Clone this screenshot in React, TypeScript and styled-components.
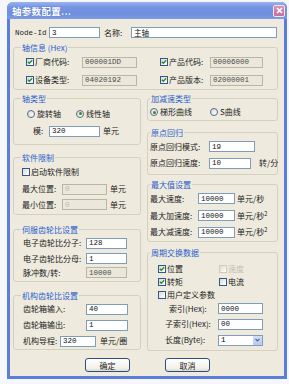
import React from "react";
import styled, { createGlobalStyle } from "styled-components";

const CJK = `"Noto Sans CJK SC", "Liberation Sans", sans-serif`;
const MONO = `"Liberation Mono", "Noto Sans CJK SC", monospace`;

const GlobalStyle = createGlobalStyle`
  body {
    margin: 0;
    background: #f6f7fb;
    font-family: ${CJK};
  }
`;

const Frame = styled.div`
  width: 280px;
  height: 377px;
  margin: 2px 0 0 7px;
  box-sizing: border-box;
  padding: 0 3px 3px;
  border-radius: 6px 6px 0 0;
  background: #5a7ed9;
  display: flex;
  flex-direction: column;
`;

const TitleBar = styled.div`
  height: 17px;
  margin: 0 -3px;
  padding: 0 2px 0 5px;
  border-radius: 6px 6px 0 0;
  background: linear-gradient(to bottom, #9bb3ee 0%, #7595e2 30%, #6f8fdf 70%, #7e9be4 100%);
  display: flex;
  align-items: center;
  justify-content: space-between;
`;

const Title = styled.span`
  color: #fff;
  font-size: 9.5px;
  font-weight: bold;
  letter-spacing: 0.3px;
  text-shadow: 0 0 1px #3a5cb8;
`;

const CloseBtn = styled.div`
  width: 12px;
  height: 12px;
  box-sizing: border-box;
  border: 1px solid #f3e6ee;
  border-radius: 2px;
  background: linear-gradient(to bottom, #d98fb4, #c2709d);
  display: flex;
  align-items: center;
  justify-content: center;
`;

const Body = styled.div`
  flex: 1;
  background: #eeebde;
  padding: 8px 6px 0 3px;
  display: flex;
  flex-direction: column;
`;

const Row = styled.div<{ $h: number; $pl?: number }>`
  display: flex;
  align-items: center;
  height: ${(p) => p.$h}px;
  padding-left: ${(p) => p.$pl ?? 0}px;
`;

const Label = styled.span<{ $w?: number; $ml?: number; $mono?: boolean; $dim?: boolean }>`
  flex: none;
  width: ${(p) => (p.$w ? `${p.$w}px` : "auto")};
  margin-left: ${(p) => p.$ml ?? 0}px;
  white-space: nowrap;
  font-family: ${(p) => (p.$mono ? MONO : CJK)};
  font-size: ${(p) => (p.$mono ? 7.5 : 8)}px;
  line-height: 10px;
  color: ${(p) => (p.$dim ? "#c4c1b2" : "#1a1a1a")};
`;

const Sup = styled.sup`
  font-size: 5.5px;
  line-height: 0;
  vertical-align: 3px;
`;

const Field = styled.input<{ $w?: number; $dim?: boolean }>`
  flex: ${(p) => (p.$w ? "none" : "1")};
  width: ${(p) => (p.$w ? `${p.$w}px` : "auto")};
  min-width: 0;
  height: 11px;
  box-sizing: border-box;
  margin: 0;
  padding: 0 2px;
  border: 1px solid #7f9db9;
  background: #fff;
  font-family: ${MONO};
  font-size: 7.5px;
  color: #111;
  outline: none;

  &:disabled {
    background: #ebe8db;
    border-color: #b9b6a6;
    color: ${(p) => (p.$dim ? "#bdbaab" : "#4a4a4a")};
  }
`;

const Group = styled.fieldset<{ $mt?: number; $pl: number; $pt?: number; $pb?: number }>`
  margin: ${(p) => p.$mt ?? 0}px 0 0;
  min-width: 0;
  padding: ${(p) => p.$pt ?? 0}px 0 ${(p) => p.$pb ?? 0}px ${(p) => p.$pl}px;
  border: 1px solid #d3d0bf;
  border-radius: 3px;
`;

const Legend = styled.legend<{ $ml: number }>`
  margin-left: ${(p) => p.$ml}px;
  padding: 0 1px;
  font-size: 8px;
  line-height: 11px;
  color: #2b5ccc;
`;

const Columns = styled.div`
  display: grid;
  grid-template-columns: 128px 131px;
  column-gap: 6px;
  align-items: start;
  margin-top: 3px;
`;

const Column = styled.div`
  display: flex;
  flex-direction: column;
`;

const Item = styled.div<{ $w?: number; $ml?: number }>`
  flex: none;
  width: ${(p) => (p.$w ? `${p.$w}px` : "auto")};
  margin-left: ${(p) => p.$ml ?? 0}px;
  display: flex;
  align-items: center;
`;

const Box = styled.span<{ $off?: boolean }>`
  flex: none;
  width: 8px;
  height: 8px;
  box-sizing: border-box;
  margin-right: 1px;
  border: 1px solid ${(p) => (p.$off ? "#cfccbe" : "#33578a")};
  background: linear-gradient(135deg, #dcdad0, #fff);
  display: flex;
  align-items: center;
  justify-content: center;
`;

const Round = styled(Box)`
  border-radius: 50%;
  border-color: #4d6a8f;
  margin-right: 2px;
`;

const Dot = styled.span`
  width: 3px;
  height: 3px;
  border-radius: 50%;
  background: #2f8a2f;
`;

const SelectBox = styled.div<{ $w: number }>`
  flex: none;
  width: ${(p) => p.$w}px;
  height: 11px;
  box-sizing: border-box;
  border: 1px solid #7f9db9;
  background: #fff;
  padding-left: 2px;
  display: flex;
  align-items: center;
  justify-content: space-between;
  font-family: ${MONO};
  font-size: 7.5px;
`;

const Arrow = styled.span`
  width: 9px;
  height: 9px;
  background: linear-gradient(to bottom, #d3defa, #b6c9f4);
  border-radius: 1px;
  display: flex;
  align-items: center;
  justify-content: center;
`;

const Buttons = styled.div`
  display: flex;
  gap: 35px;
  padding-left: 72px;
  margin-top: 7px;
`;

const Button = styled.div`
  width: 45px;
  height: 14px;
  box-sizing: border-box;
  border: 1px solid #2b4f7e;
  border-radius: 3px;
  background: linear-gradient(to bottom, #ffffff, #f1efe6 80%, #dcd9cc);
  display: flex;
  align-items: center;
  justify-content: center;
  font-size: 8px;
  color: #1a1a1a;
`;

const Check: React.FC<{ on?: boolean; off?: boolean; label: string; w?: number }> = ({ on, off, label, w }) => (
  <Item $w={w}>
    <Box $off={off}>
      {on && (
        <svg width="6" height="6" viewBox="0 0 6 6">
          <path d="M0.8 2.8 L2.3 4.3 L5.2 1.2" fill="none" stroke="#2a8a2a" strokeWidth="1.3" />
        </svg>
      )}
    </Box>
    <Label $dim={off}>{label}</Label>
  </Item>
);

const Radio: React.FC<{ on?: boolean; label: string; w?: number }> = ({ on, label, w }) => (
  <Item $w={w}>
    <Round>{on && <Dot />}</Round>
    <Label>{label}</Label>
  </Item>
);

const Unit2: React.FC = () => (
  <Label $ml={2}>
    单元/秒<Sup>2</Sup>
  </Label>
);

export default function App() {
  return (
    <>
      <GlobalStyle />
      <Frame>
        <TitleBar>
          <Title>轴参数配置...</Title>
          <CloseBtn>
            <svg width="7" height="7" viewBox="0 0 7 7">
              <path d="M1 1 L6 6 M6 1 L1 6" stroke="#fff" strokeWidth="1.6" />
            </svg>
          </CloseBtn>
        </TitleBar>
        <Body>
          <Row $h={11} $pl={2}>
            <Label $mono $w={34}>Node-Id</Label>
            <Field $w={51} defaultValue="3" />
            <Label $w={27} $ml={4}>名称:</Label>
            <Field defaultValue="主轴" style={{ marginRight: 1 }} />
          </Row>

          <Group $mt={4} $pl={12}>
            <Legend $ml={-5}>轴信息 (Hex)</Legend>
            <Row $h={18}>
              <Item $w={111}>
                <Check on label="厂商代码:" />
                <Field $w={55} disabled defaultValue="000001DD" style={{ marginLeft: "auto" }} />
              </Item>
              <Item $w={103} $ml={23}>
                <Check on label="产品代码:" />
                <Field $w={53} disabled defaultValue="00006000" style={{ marginLeft: "auto" }} />
              </Item>
            </Row>
            <Row $h={18}>
              <Item $w={111}>
                <Check on label="设备类型:" />
                <Field $w={55} disabled defaultValue="04020192" style={{ marginLeft: "auto" }} />
              </Item>
              <Item $w={103} $ml={23}>
                <Check on label="产品版本:" />
                <Field $w={53} disabled defaultValue="02000001" style={{ marginLeft: "auto" }} />
              </Item>
            </Row>
          </Group>

          <Columns>
            <Column>
              <Group $pl={8} $pb={5}>
                <Legend $ml={-1}>轴类型</Legend>
                <Row $h={19} $pl={5}>
                  <Radio w={49} label="旋转轴" />
                  <Radio on label="线性轴" />
                </Row>
                <Row $h={16} $pl={11}>
                  <Label $w={16}>模:</Label>
                  <Field $w={51} defaultValue="320" />
                  <Label $ml={3}>单元</Label>
                </Row>
              </Group>

              <Group $mt={7} $pl={8} $pb={2}>
                <Legend $ml={-1}>软件限制</Legend>
                <Row $h={18}>
                  <Check label="启动软件限制" />
                </Row>
                <Row $h={16}>
                  <Label $w={40}>最大位置:</Label>
                  <Field $w={45} disabled $dim defaultValue="0" />
                  <Label $ml={3}>单元</Label>
                </Row>
                <Row $h={15}>
                  <Label $w={40}>最小位置:</Label>
                  <Field $w={45} disabled $dim defaultValue="0" />
                  <Label $ml={3}>单元</Label>
                </Row>
              </Group>

              <Group $mt={9} $pl={8} $pb={2}>
                <Legend $ml={-1}>伺服齿轮比设置</Legend>
                <Row $h={16} $pl={1}>
                  <Label $w={63}>电子齿轮比分子:</Label>
                  <Field $w={41} defaultValue="128" />
                </Row>
                <Row $h={15} $pl={1}>
                  <Label $w={63}>电子齿轮比分母:</Label>
                  <Field $w={41} defaultValue="1" />
                </Row>
                <Row $h={13} $pl={1}>
                  <Label $w={63}>脉冲数/转:</Label>
                  <Field $w={41} disabled defaultValue="10000" />
                </Row>
              </Group>

              <Group $mt={8} $pl={8}>
                <Legend $ml={-1}>机构齿轮比设置</Legend>
                <Row $h={16} $pl={1}>
                  <Label $w={63}>齿轮箱输入:</Label>
                  <Field $w={42} defaultValue="40" />
                </Row>
                <Row $h={16} $pl={1}>
                  <Label $w={63}>齿轮箱输出:</Label>
                  <Field $w={42} defaultValue="1" />
                </Row>
                <Row $h={16} $pl={1}>
                  <Label $w={37}>机构导程:</Label>
                  <Field $w={36} defaultValue="320" />
                  <Label $ml={4}>单元/圈</Label>
                </Row>
              </Group>
            </Column>

            <Column>
              <Group $pl={2}>
                <Legend $ml={0}>加减速类型</Legend>
                <Row $h={16}>
                  <Radio on w={60} label="梯形曲线" />
                  <Radio label="S曲线" />
                </Row>
              </Group>

              <Group $mt={6} $pl={2} $pb={3}>
                <Legend $ml={0}>原点回归</Legend>
                <Row $h={17}>
                  <Label $w={59}>原点回归模式:</Label>
                  <Field $w={46} defaultValue="19" />
                </Row>
                <Row $h={16}>
                  <Label $w={59}>原点回归速度:</Label>
                  <Field $w={42} defaultValue="10" />
                  <Label $ml={8}>转/分</Label>
                </Row>
              </Group>

              <Group $mt={4} $pl={2} $pb={1}>
                <Legend $ml={0}>最大值设置</Legend>
                <Row $h={17}>
                  <Label $w={48}>最大速度:</Label>
                  <Field $w={37} defaultValue="10000" />
                  <Label $ml={2}>单元/秒</Label>
                </Row>
                <Row $h={17}>
                  <Label $w={48}>最大加速度:</Label>
                  <Field $w={37} defaultValue="10000" />
                  <Unit2 />
                </Row>
                <Row $h={16}>
                  <Label $w={48}>最大减速度:</Label>
                  <Field $w={37} defaultValue="10000" />
                  <Unit2 />
                </Row>
              </Group>

              <Group $mt={5} $pl={2} $pt={4} $pb={2}>
                <Legend $ml={0}>周期交换数据</Legend>
                <Row $h={13} $pl={8}>
                  <Check on w={61} label="位置" />
                  <Check off label="速度" />
                </Row>
                <Row $h={13} $pl={8}>
                  <Check on w={61} label="转矩" />
                  <Check label="电流" />
                </Row>
                <Row $h={13} $pl={8}>
                  <Check label="用户定义参数" />
                </Row>
                <Row $h={15} $pl={19}>
                  <Label $w={49}>索引(Hex):</Label>
                  <Field $w={45} defaultValue="0000" />
                </Row>
                <Row $h={16} $pl={15}>
                  <Label $w={53}>子索引(Hex):</Label>
                  <Field $w={45} defaultValue="00" />
                </Row>
                <Row $h={16} $pl={15}>
                  <Label $w={53}>长度(Byte):</Label>
                  <SelectBox $w={45}>
                    1
                    <Arrow>
                      <svg width="5" height="4" viewBox="0 0 5 4">
                        <path d="M0.5 0.8 L2.5 2.8 L4.5 0.8" fill="none" stroke="#4d6185" strokeWidth="1.2" />
                      </svg>
                    </Arrow>
                  </SelectBox>
                </Row>
              </Group>
            </Column>
          </Columns>

          <Buttons>
            <Button>确定</Button>
            <Button>取消</Button>
          </Buttons>
        </Body>
      </Frame>
    </>
  );
}
